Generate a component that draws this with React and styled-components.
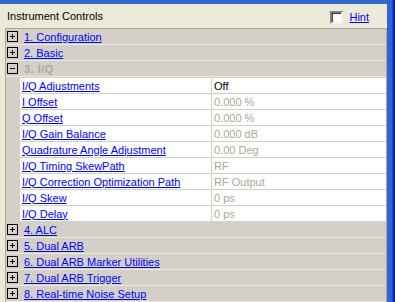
import React from 'react'
import styled, { createGlobalStyle } from "styled-components";

const GlobalStyle = createGlobalStyle`
	html, body {
		margin: 0;
		padding: 0;
		height: 302px;
		overflow: hidden;
		background: #ECE9D8;
	}
	body {
		font-family: "Liberation Sans", Arial, sans-serif;
		font-size: 11px;
	}
`;

const Frame = styled.div`
	display: flex;
	width: 395px;
	height: 302px;
	overflow: hidden;
`;

const Main = styled.div`
	flex: 1;
	display: flex;
	flex-direction: column;
	min-width: 0;
`;

const WindowEdge = styled.div`
	width: 8px;
	flex-shrink: 0;
	background: linear-gradient(to right, #3167CC 0, #2D62D6 5px, #0C2FC0 6px, #0019A0 8px);
`;

const TopEdge = styled.div`
	height: 4px;
	background: #3169CC;
	flex-shrink: 0;
`;

const TitleBar = styled.div`
	height: 24px;
	display: flex;
	align-items: center;
	justify-content: space-between;
	padding: 0 18px 0 7px;
	flex-shrink: 0;
	color: #000;
`;

const HintBox = styled.label`
	display: flex;
	align-items: center;
	gap: 6px;
	margin-top: 2px;
`;

const Check = styled.span`
	width: 9px;
	height: 9px;
	background: #fff;
	border-style: solid;
	border-width: 2px;
	border-color: #808080 #F4F3EE #F4F3EE #808080;
	box-shadow: inset 1px 1px 0 #404040;
`;

const Link = styled.a`
	color: ${p => (p.$disabled ? "#ACA899" : "#0000FF")};
	text-decoration: ${p => (p.$disabled ? "none" : "underline")};
	font-weight: ${p => (p.$bold ? "bold" : "normal")};
	letter-spacing: ${p => (p.$bold ? "0.5px" : "0")};
	cursor: pointer;
	white-space: nowrap;
`;

const Panel = styled.div`
	flex: 1;
	margin-left: 5px;
	border-top: 1px solid #ACA899;
	border-left: 1px solid #ACA899;
	border-right: 1px solid #ACA899;
	background: #D4D0C8;
	display: flex;
	flex-direction: column;
`;

const SectionRow = styled.div`
	height: 15px;
	border-bottom: 1px solid #ECE9D8;
	display: flex;
	align-items: center;
	gap: 6px;
	padding-left: 1px;
	flex-shrink: 0;
`;

const Toggle = styled.span`
	position: relative;
	width: 9px;
	height: 9px;
	border: 1px solid #000;
	flex-shrink: 0;
	&::before {
		content: "";
		position: absolute;
		left: 2px;
		top: 4px;
		width: 5px;
		height: 1px;
		background: #000;
	}
	&::after {
		content: "";
		display: ${p => (p.$open ? "none" : "block")};
		position: absolute;
		left: 4px;
		top: 2px;
		width: 1px;
		height: 5px;
		background: #000;
	}
`;

const SubTable = styled.div`
	margin-left: 14px;
	background: #fff;
	border-top: 1px solid #D4D0C8;
	display: grid;
	grid-template-columns: 191px 1fr;
	flex-shrink: 0;
`;

const Cell = styled.div`
	height: 15px;
	border-bottom: 1px solid #D4D0C8;
	border-left: ${p => (p.$value ? "1px solid #D4D0C8" : "none")};
	display: flex;
	align-items: center;
	padding-left: 2px;
	color: ${p => (p.$active ? "#000" : "#ACA899")};
	white-space: nowrap;
	overflow: hidden;
`;

const before = ["1. Configuration", "2. Basic"];

const params = [
	["I/Q Adjustments", "Off", true],
	["I Offset", "0.000 %"],
	["Q Offset", "0.000 %"],
	["I/Q Gain Balance", "0.000 dB"],
	["Quadrature Angle Adjustment", "0.00 Deg"],
	["I/Q Timing SkewPath", "RF"],
	["I/Q Correction Optimization Path", "RF Output"],
	["I/Q Skew", "0 ps"],
	["I/Q Delay", "0 ps"],
];

const after = [
	"4. ALC",
	"5. Dual ARB",
	"6. Dual ARB Marker Utilities",
	"7. Dual ARB Trigger",
	"8. Real-time Noise Setup",
];

const App = () => (
	<>
		<GlobalStyle />
		<Frame>
			<Main>
				<TopEdge />
				<TitleBar>
					<span>Instrument Controls</span>
					<HintBox>
						<Check />
						<Link>Hint</Link>
					</HintBox>
				</TitleBar>
				<Panel>
					{before.map(n => (
						<SectionRow key={n}>
							<Toggle />
							<Link>{n}</Link>
						</SectionRow>
					))}
					<SectionRow>
						<Toggle $open />
						<Link $disabled $bold>3. I/Q</Link>
					</SectionRow>
					<SubTable>
						{params.map(([label, value, active]) => (
							<React.Fragment key={label}>
								<Cell $active>
									<Link>{label}</Link>
								</Cell>
								<Cell $value $active={active}>{value}</Cell>
							</React.Fragment>
						))}
					</SubTable>
					{after.map(n => (
						<SectionRow key={n}>
							<Toggle />
							<Link>{n}</Link>
						</SectionRow>
					))}
				</Panel>
			</Main>
			<WindowEdge />
		</Frame>
	</>
);

export default App;
